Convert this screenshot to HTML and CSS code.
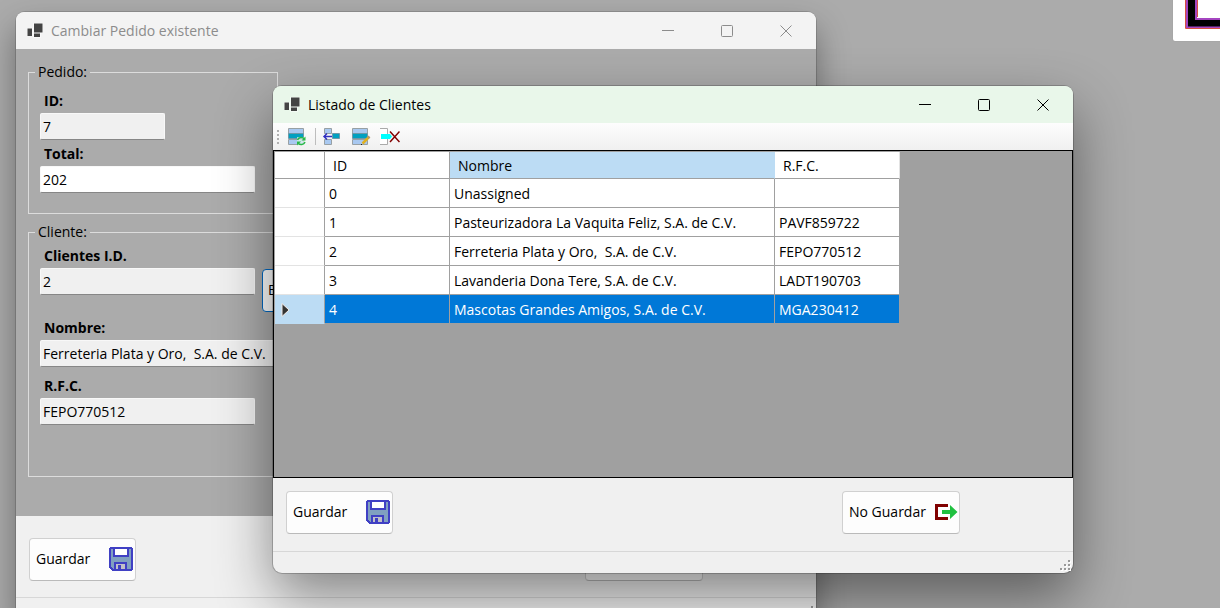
FILE: index.html
```html
<!DOCTYPE html>
<html lang="es">
<head>
<meta charset="utf-8">
<title>Listado de Clientes</title>
<link rel="stylesheet" href="styles.css">
</head>
<body>
<svg class="symbols" aria-hidden="true">
  <symbol id="app" viewBox="0 0 16 16">
    <path d="M6 0h10v10H6zM0 5h6v8H0zM6 10h8v5H6z" fill="#fff" opacity=".5"/>
    <path d="M7 .5h8.500v9H7zM.5 5.500H5V13H.5zM7 10.500h6v3.500H7z" fill="#444"/>
  </symbol>
  <symbol id="min" viewBox="0 0 12 12"><path d="M0 5.500h12" stroke="currentColor" fill="none"/></symbol>
  <symbol id="max" viewBox="0 0 12 12"><rect x=".5" y=".5" width="11" height="11" rx="1" stroke="currentColor" fill="none"/></symbol>
  <symbol id="close" viewBox="0 0 12 12"><path d="M.5.5l11 11M11.500.5l-11 11" stroke="currentColor" fill="none"/></symbol>
  <symbol id="save" viewBox="0 0 24 24" shape-rendering="crispEdges">
    <path d="M1 0h22v1h1v22h-1v1H3v-1H2v-1H1v-1H0V1h1z" fill="#4040c4"/>
    <path d="M2 2h20v20H4v-1H3v-1H2z" fill="#80a0c0"/>
    <path d="M4 1h16v9H4zM5 15h13v8H5z" fill="#4040c4"/>
    <path d="M6 2h12v6H6z" fill="#fff"/>
    <path d="M7 17h9v5H7z" fill="#c0c0c8"/>
    <path d="M9 18h3v4H9z" fill="#4040c4"/>
  </symbol>
  <symbol id="exit" viewBox="0 0 23 16">
    <path d="M0 0h13v3H3v10h10v3H0z" fill="#800000"/>
    <path d="M7 6h8V1l7.500 7L15 15v-5H7z" fill="#20c040"/>
  </symbol>
  <symbol id="grip" viewBox="0 0 12 12" shape-rendering="crispEdges">
    <path d="M9 1h2v2H9zM5 5h2v2H5zM9 5h2v2H9zM1 9h2v2H1zM5 9h2v2H5zM9 9h2v2H9z" fill="#fff"/>
    <path d="M8 0h2v2H8zM4 4h2v2H4zM8 4h2v2H8zM0 8h2v2H0zM4 8h2v2H4zM8 8h2v2H8z" fill="#999"/>
  </symbol>
  <symbol id="rows" viewBox="0 0 16 18">
    <path d="M.5.5h15v5H.5zM.5 11.500h15v5H.5z" fill="#a8c8f0" stroke="#98a0a4"/>
    <path d="M.5 5.500h15v5H.5z" fill="#00a0c0" stroke="#6c98a8"/>
  </symbol>
</svg>

<main class="desktop">
  <div class="tile">
    <svg width="47" height="41" viewBox="0 0 47 41" aria-hidden="true">
      <path d="M13 0v28h34v-9H23V0z" fill="#000"/>
      <path d="M14 0v27.500H47M23 0v19H47" fill="none" stroke="#a445c0" stroke-width="2"/>
      <path d="M12.500 0v28.500H47M24.500 0v17" fill="none" stroke="#d85040"/>
    </svg>
  </div>

  <section class="window window-order" aria-label="Cambiar Pedido existente">
    <header class="titlebar">
      <svg class="app-icon" aria-hidden="true"><use href="#app"/></svg>
      <h1>Cambiar Pedido existente</h1>
      <button class="caption" aria-label="Minimizar"><svg><use href="#min"/></svg></button>
      <button class="caption" aria-label="Maximizar"><svg><use href="#max"/></svg></button>
      <button class="caption" aria-label="Cerrar"><svg><use href="#close"/></svg></button>
    </header>
    <form class="order-form">
      <fieldset class="group group-order">
        <legend>Pedido:</legend>
        <div class="field short"><label for="order-id">ID:</label><input id="order-id" value="7" readonly></div>
        <div class="field"><label for="total">Total:</label><input id="total" value="202"></div>
      </fieldset>
      <fieldset class="group group-client">
        <legend>Cliente:</legend>
        <div class="lookup">
          <div class="field"><label for="client-id">Clientes I.D.</label><input id="client-id" value="2" readonly></div>
          <button type="button" class="btn btn-default">Buscar</button>
        </div>
        <div class="field long"><label for="name">Nombre:</label><input id="name" value="Ferreteria Plata y Oro,  S.A. de C.V." readonly></div>
        <div class="field field-rfc"><label for="rfc">R.F.C.</label><input id="rfc" value="FEPO770512" readonly></div>
      </fieldset>
    </form>
    <div class="actions">
      <button class="btn btn-save">Guardar<svg class="save-icon" aria-hidden="true"><use href="#save"/></svg></button>
      <button class="btn btn-exit">No Guardar<svg class="exit-icon" aria-hidden="true"><use href="#exit"/></svg></button>
    </div>
    <footer class="status"><svg aria-hidden="true"><use href="#grip"/></svg></footer>
  </section>

  <section class="window window-clients" aria-label="Listado de Clientes">
    <header class="titlebar">
      <svg class="app-icon" aria-hidden="true"><use href="#app"/></svg>
      <h1>Listado de Clientes</h1>
      <button class="caption" aria-label="Minimizar"><svg><use href="#min"/></svg></button>
      <button class="caption" aria-label="Maximizar"><svg><use href="#max"/></svg></button>
      <button class="caption" aria-label="Cerrar"><svg><use href="#close"/></svg></button>
    </header>
    <div class="toolbar" role="toolbar">
      <svg class="handle" width="2" height="14" aria-hidden="true"><path d="M0 0h2v2H0zM0 4h2v2H0zM0 8h2v2H0zM0 12h2v2H0z" fill="#b0b0b0"/></svg>
      <button aria-label="Actualizar"><svg viewBox="0 0 22 18">
        <use href="#rows" x="2" width="16" height="18"/>
        <path d="M11 9h8v8h-8z" fill="#e4f4ec" opacity=".7"/>
        <path d="M11.500 12c1-3 5-3.500 7-1M19 14c-1 3-5 3.500-7 1" fill="none" stroke="#28b848" stroke-width="1.500"/>
        <path d="M19.500 8.500v4h-4zM11 17.500v-4h4z" fill="#28b848"/>
      </svg></button>
      <span class="separator"></span>
      <button aria-label="Insertar"><svg viewBox="0 0 22 18">
        <path d="M2.500.5h7v5h-7zM2.500 11.500h7v5h-7z" fill="#a8c8f0" stroke="#98a0a4"/>
        <path d="M10.500 5.500h7v5h-7z" fill="#00a0c0" stroke="#6c98a8"/>
        <path d="M2 8.500h8M5 5.500l-3 3 3 3" fill="none" stroke="#3030c0" stroke-width="1.500"/>
      </svg></button>
      <button aria-label="Editar"><svg viewBox="0 0 22 18">
        <use href="#rows" x="2" width="16" height="18"/>
        <path d="M12.500 15.500l6-6" stroke="#e0b020" stroke-width="2.500"/>
        <path d="M18 10l1.500-1.500" stroke="#b09870" stroke-width="2.500"/>
        <path d="M11 16h1v1h-1z" fill="#222"/>
      </svg></button>
      <button aria-label="Eliminar"><svg viewBox="0 0 22 18">
        <path d="M2 .5h7.500v16H2" fill="#fff" stroke="#aaa"/>
        <path d="M3 6h9l2 2.500-2 2.500H3z" fill="#00ffff"/>
        <path d="M12 3.500l9.500 10.500M21.500 3.500L12 14" stroke="#800000" stroke-width="1.500"/>
      </svg></button>
    </div>
    <div class="grid">
      <table>
        <colgroup><col class="col-marker"><col class="col-id"><col class="col-name"><col class="col-rfc"></colgroup>
        <thead><tr><td></td><th scope="col">ID</th><th scope="col" class="sorted">Nombre</th><th scope="col">R.F.C.</th></tr></thead>
        <tbody>
          <tr><td></td><td>0</td><td>Unassigned</td><td></td></tr>
          <tr><td></td><td>1</td><td>Pasteurizadora La Vaquita Feliz, S.A. de C.V.</td><td>PAVF859722</td></tr>
          <tr><td></td><td>2</td><td>Ferreteria Plata y Oro,  S.A. de C.V.</td><td>FEPO770512</td></tr>
          <tr><td></td><td>3</td><td>Lavanderia Dona Tere, S.A. de C.V.</td><td>LADT190703</td></tr>
          <tr class="selected"><td><svg width="12" height="14" aria-label="Fila actual"><path d="M3 .5l7 6.500-7 6.500z" fill="#333" stroke="#f4ece8"/></svg></td><td>4</td><td>Mascotas Grandes Amigos, S.A. de C.V.</td><td>MGA230412</td></tr>
        </tbody>
      </table>
    </div>
    <div class="actions">
      <button class="btn btn-save">Guardar<svg class="save-icon" aria-hidden="true"><use href="#save"/></svg></button>
      <button class="btn btn-exit">No Guardar<svg class="exit-icon" aria-hidden="true"><use href="#exit"/></svg></button>
    </div>
    <footer class="status"><svg aria-hidden="true"><use href="#grip"/></svg></footer>
  </section>
</main>
</body>
</html>
```

FILE: styles.css
```css
* { box-sizing: border-box; }

body {
  margin: 0;
  font: 14px/20px "Open Sans", "Noto Sans", sans-serif;
  color: #000;
}

button, input { font: inherit; color: inherit; }

.symbols { display: none; }

.desktop {
  position: relative;
  height: 100vh;
  overflow: hidden;
  background: #ababab;
}

.tile {
  position: absolute;
  top: 0;
  right: 0;
  display: flex;
  background: #fff;
  border-bottom-left-radius: 2px;
  box-shadow: 0 0 1px #888;
}

.window {
  position: absolute;
  width: 800px;
  background: #f0f0f0;
  border-radius: 9px;
}

.window-order {
  left: 16px;
  top: 12px;
  box-shadow: 0 0 0 1px rgba(0, 0, 0, .15), 0 16px 32px rgba(0, 0, 0, .38);
}

.window-clients {
  left: 273px;
  top: 86px;
  box-shadow: 0 0 0 1px rgba(0, 0, 0, .2), 0 24px 56px rgba(0, 0, 0, .45);
}

.titlebar {
  display: flex;
  align-items: center;
  height: 37px;
  padding: 0 1px 0 11px;
  background: #f3f3f3;
  color: #8c8c8c;
  border-radius: 8px 8px 0 0;
}

.window-clients .titlebar { background: #e9f7ea; color: #000; }

.titlebar h1 {
  flex: 1;
  margin: 0;
  font-size: 14px;
  font-weight: 400;
}

.app-icon { width: 16px; height: 16px; margin-right: 8px; }

.caption {
  display: flex;
  align-items: center;
  justify-content: center;
  width: 59px;
  height: 36px;
  padding: 0;
  border: 0;
  background: none;
}

.caption svg { width: 12px; height: 12px; }

.order-form {
  display: flex;
  flex-direction: column;
  align-items: flex-start;
  gap: 8px;
  padding: 13px 12px 39px;
  background: #ababab;
}

.group {
  margin: 0;
  border: 1px solid #dcdcdc;
}

.group legend { padding: 0 3px; }
.group-order { width: 250px; padding: 9px 6px 20px; }
.group-client { width: 360px; padding: 4px 6px 51px; }

.field {
  display: flex;
  flex-direction: column;
  gap: 2px;
  width: 215px;
  margin-left: 5px;
}

.field + .field { margin-top: 4px; }
.field.short { width: 125px; }
.field.long { width: 300px; }
.field.field-rfc { margin-top: 9px; }
.field label { padding-left: 4px; font-weight: 700; }

.field input {
  width: 100%;
  height: 27px;
  padding: 0 2px;
  border: 1px solid #f8f8f8;
  border-bottom: 1px solid #868686;
  border-radius: 2px;
  background: #fff;
  outline: 0;
}

.field input:read-only { background: #f0f0f0; }

.lookup {
  display: flex;
  gap: 7px;
  height: 66px;
  margin-bottom: 6px;
}

.btn {
  display: flex;
  align-items: center;
  justify-content: space-between;
  height: 43px;
  padding: 0 2px 1px 6px;
  border: 1px solid #d0d0d0;
  border-bottom-color: #bababa;
  border-radius: 4px;
  background: #fdfdfd;
}

.btn-default { align-self: flex-end; width: 90px; border: 1px solid #0067c0; padding-left: 5px; }
.btn-save { width: 107px; }
.btn-exit { width: 118px; padding-right: 1px; }
.save-icon { width: 24px; height: 24px; }
.exit-icon { width: 23px; height: 16px; }

.actions {
  display: flex;
  justify-content: space-between;
  padding: 13px 113px 17px 13px;
}

.window-order .actions { padding-top: 22px; padding-bottom: 16px; }

.status {
  display: flex;
  justify-content: flex-end;
  align-items: flex-end;
  height: 22px;
  padding: 0 1px 1px;
  border-top: 1px solid #d7d7d7;
}

.status svg { width: 12px; height: 12px; }

.toolbar {
  display: flex;
  align-items: center;
  gap: 6px;
  height: 27px;
  padding-left: 4px;
  background: linear-gradient(#fdfdfd, #f0f0f0);
}

.toolbar button {
  display: flex;
  padding: 0;
  border: 0;
  background: none;
}

.toolbar button svg { width: 22px; height: 18px; }
.handle { margin-right: 1px; }
.separator { width: 1px; height: 17px; margin-left: 1px; background: #bdbdbd; }

.grid {
  min-height: 328px;
  padding: 1px 0 0 1px;
  border: 1px solid #000;
  background: #a0a0a0;
}

.grid table {
  width: 625px;
  table-layout: fixed;
  border-collapse: separate;
  border-spacing: 0;
  background: #fff;
}

.col-marker { width: 50px; }
.col-id { width: 125px; }
.col-name { width: 325px; }
.col-rfc { width: 125px; }

.grid th, .grid td {
  height: 29px;
  padding: 2px 4px 0;
  border-right: 1px solid #a0a0a0;
  border-bottom: 1px solid #a0a0a0;
  font-weight: 400;
  text-align: left;
  white-space: pre;
}

.grid thead th, .grid thead td { height: 27px; }
.grid thead th { padding-left: 8px; }
.grid thead th:last-child { border-right-color: #e3e3e3; }
.grid thead .sorted { background: #bcdcf4; border-right-color: #bcdcf4; }
.grid tbody td:first-child { border-bottom-color: #e3e3e3; }
.grid .selected td { background: #0078d7; color: #fff; }
.grid .selected td:first-child { background: #bcdcf4; border-bottom-color: #bcdcf4; }
.grid td svg { display: block; }
```
